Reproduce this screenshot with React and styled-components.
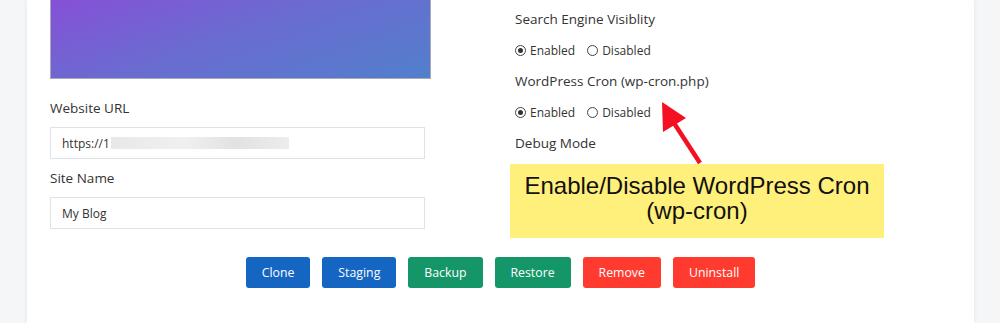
import styled, { createGlobalStyle } from "styled-components";

const GlobalStyle = createGlobalStyle`
  body {
    margin: 0;
    background: #f5f6f8;
    font-family: "Open Sans", "Noto Sans", sans-serif;
    color: #333;
  }
`;

const Page = styled.div`
  width: 1000px;
  height: 323px;
  overflow: hidden;
  padding: 0 26px 0 27px;
  box-sizing: border-box;
`;

const Card = styled.div`
  background: #fff;
  height: 100%;
  box-shadow: 0 0 5px rgba(0, 0, 0, 0.07);
  padding: 0 23px;
  box-sizing: border-box;
`;

const Columns = styled.div`
  display: grid;
  grid-template-columns: 381px 1fr;
  column-gap: 84px;
`;

const LeftCol = styled.div`
  display: flex;
  flex-direction: column;
`;

const Banner = styled.div`
  height: 79px;
  margin-top: -1px;
  border: 1px solid #a9a9b5;
  border-top: none;
  background: linear-gradient(160deg, #8650d8 0%, #6b6bd0 45%, #527fcc 100%);
`;

const Label = styled.div`
  font-size: 13.5px;
  line-height: 20px;
  color: #333;
`;

const FieldLabel = styled(Label)`
  margin-top: ${(p) => p.$top}px;
`;

const Input = styled.div`
  margin-top: 9px;
  width: 375px;
  height: 32px;
  box-sizing: border-box;
  border: 1px solid #dfe3e8;
  padding: 0 11px;
  display: flex;
  align-items: center;
  font-size: 12px;
  color: #333;
`;

const Blur = styled.span`
  display: inline-block;
  width: 178px;
  height: 12px;
  margin-left: 1px;
  background: linear-gradient(90deg, #e8e8e8, #f0f0f0 40%, #e2e2e2 70%, #ececec);
`;

const RightCol = styled.div`
  position: relative;
  padding-top: 9px;
`;

const Group = styled.div`
  margin-bottom: 11px;
`;

const RadioRow = styled.div`
  display: flex;
  align-items: center;
  height: 20px;
  margin-top: 11px;
  font-size: 12px;
`;

const RadioOption = styled.label`
  display: flex;
  align-items: center;
  margin-right: 12px;
`;

const Dot = styled.span`
  width: 11px;
  height: 11px;
  border-radius: 50%;
  border: 1px solid #444;
  box-sizing: border-box;
  margin-right: 4px;
  display: flex;
  align-items: center;
  justify-content: center;
  &::after {
    content: "";
    width: 5px;
    height: 5px;
    border-radius: 50%;
    background: ${(p) => (p.$checked ? "#333" : "transparent")};
  }
`;

const Note = styled.div`
  position: absolute;
  left: -5px;
  top: 164px;
  width: 374px;
  height: 74px;
  background: #fff07c;
  font-family: "Liberation Sans", Arial, sans-serif;
  font-size: 24px;
  line-height: 25px;
  color: #111;
  text-align: center;
  padding-top: 9px;
  box-sizing: border-box;
`;

const Arrow = styled.svg`
  position: absolute;
  left: 125px;
  top: 95px;
  overflow: visible;
`;

const ButtonRow = styled.div`
  display: flex;
  justify-content: center;
  gap: 12px;
  margin-top: 28px;
`;

const colors = {
  blue: "#1565c2",
  green: "#159668",
  red: "#ff3b30",
};

const Button = styled.button`
  height: 31px;
  padding: 0 16px;
  border: none;
  border-radius: 3px;
  background: ${(p) => colors[p.$tone]};
  color: #fff;
  font-family: "Open Sans", "Noto Sans", sans-serif;
  font-size: 12.3px;
`;

const Radios = ({ checked = "enabled" }) => (
  <RadioRow>
    <RadioOption>
      <Dot $checked={checked === "enabled"} />
      Enabled
    </RadioOption>
    <RadioOption>
      <Dot $checked={checked === "disabled"} />
      Disabled
    </RadioOption>
  </RadioRow>
);

const buttons = [
  ["Clone", "blue"],
  ["Staging", "blue"],
  ["Backup", "green"],
  ["Restore", "green"],
  ["Remove", "red"],
  ["Uninstall", "red"],
];

export default function App() {
  return (
    <Page>
      <GlobalStyle />
      <Card>
        <Columns>
          <LeftCol>
            <Banner />
            <FieldLabel $top={19}>Website URL</FieldLabel>
            <Input>
              https://1
              <Blur />
            </Input>
            <FieldLabel $top={9}>Site Name</FieldLabel>
            <Input>My Blog</Input>
          </LeftCol>
          <RightCol>
            <Group>
              <Label>Search Engine Visiblity</Label>
              <Radios />
            </Group>
            <Group>
              <Label>WordPress Cron (wp-cron.php)</Label>
              <Radios />
            </Group>
            <Group>
              <Label>Debug Mode</Label>
            </Group>
            <Arrow width="60" height="70" viewBox="0 0 60 70">
              <line x1="60" y1="68" x2="32" y2="25" stroke="#f50f22" strokeWidth="4.5" />
              <polygon points="22,7 46,23 23,37" fill="#f50f22" />
            </Arrow>
            <Note>
              Enable/Disable WordPress Cron
              <br />
              (wp-cron)
            </Note>
          </RightCol>
        </Columns>
        <ButtonRow>
          {buttons.map(([text, tone]) => (
            <Button key={text} $tone={tone}>
              {text}
            </Button>
          ))}
        </ButtonRow>
      </Card>
    </Page>
  );
}
